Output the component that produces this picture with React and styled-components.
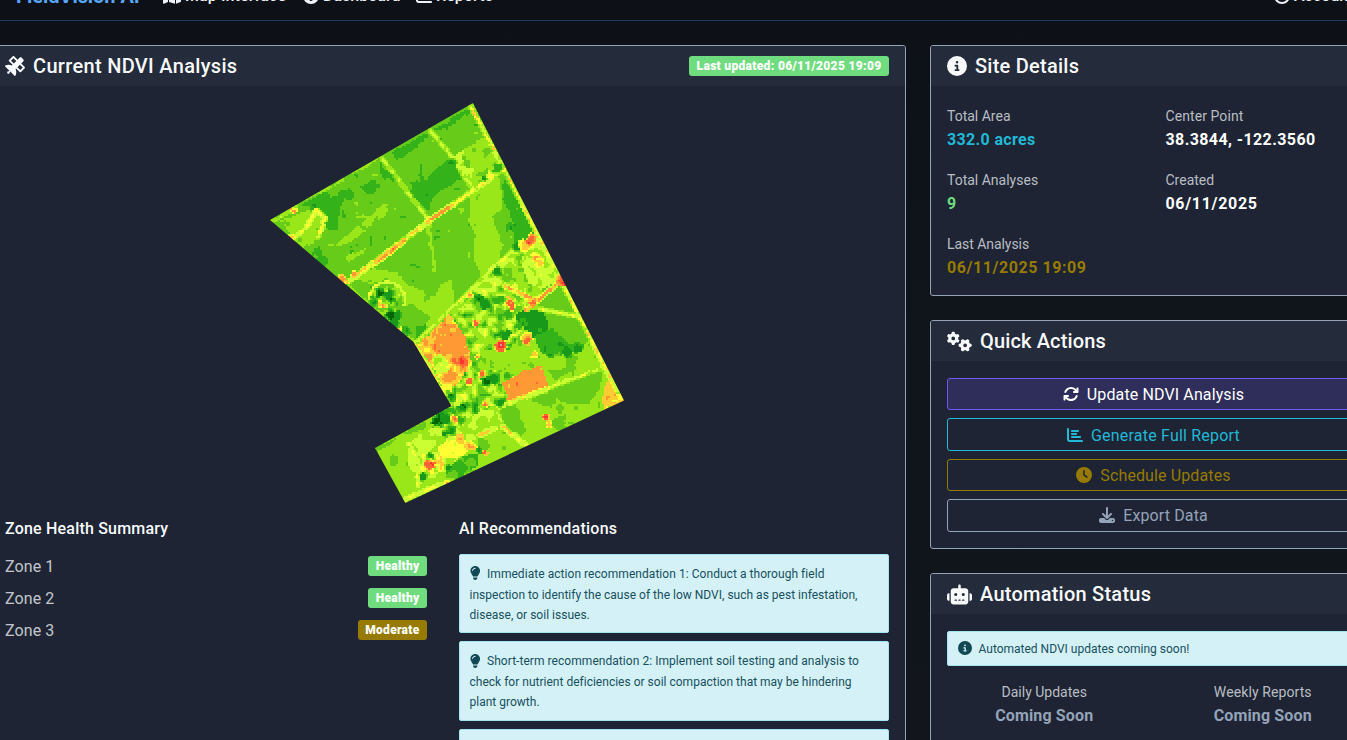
import React from "react";
import styled, { createGlobalStyle } from "styled-components";
import {
  FaSatellite, FaCircleInfo, FaGears, FaArrowsRotate, FaChartBar, FaClock,
  FaDownload, FaRobot, FaLightbulb, FaMapLocationDot, FaGauge, FaChartLine, FaCircleUser,
} from "react-icons/fa6";

const GlobalStyle = createGlobalStyle`
  * { box-sizing: border-box; }
  html, body { margin: 0; height: 740px; overflow: hidden; }
  body {
    background: linear-gradient(180deg, #0d1117 0%, #10141b 50%, #12151c 100%);
    color: #f8fafc;
    font: 400 16px/24px Roboto, "Liberation Sans", sans-serif;
  }
  svg { display: block; flex: none; }
`;

const Page = styled.div`
  width: 1347px;
  height: 740px;
  overflow: hidden;
`;
const Nav = styled.nav`
  display: flex;
  align-items: center;
  height: 49px;
  margin-top: -28px;
  padding-left: 16px;
  border-bottom: 1px solid #1f3a5f;
  font-weight: 500;
  white-space: nowrap;
`;
const Brand = styled.span`
  width: 147px;
  color: #58a6ff;
  font-size: 20px;
  font-weight: 700;
  letter-spacing: -0.05px;
  margin-top: -1px;
`;
const NavLink = styled.span`
  display: flex;
  align-items: center;
  gap: 4px;
  width: ${(p) => p.$w}px;
  letter-spacing: ${(p) => p.$ls || 0}px;
  color: #eef1f6;
`;
const Spacer = styled.div`
  flex: 1;
`;
const Main = styled.main`
  display: grid;
  grid-template-columns: 918px 447px;
  gap: 24px;
  align-items: start;
  width: 1389px;
  margin: 24px 0 0 -12px;
`;
const Side = styled.div`
  display: flex;
  flex-direction: column;
  gap: 24px;
`;
const Card = styled.section`
  height: ${(p) => p.$h}px;
  border: 1px solid #94a3b8;
  border-radius: 3px;
  background: #1e2433;
  overflow: hidden;
`;
const CardHeader = styled.header`
  display: flex;
  align-items: center;
  justify-content: space-between;
  height: 40px;
  padding: 0 16px;
  background: #242b3a;
`;
const Title = styled.h5`
  display: flex;
  align-items: center;
  gap: 8px;
  margin: 0;
  font-size: 20px;
  line-height: 24px;
  font-weight: 500;
  letter-spacing: ${(p) => p.$ls || 0}px;
  white-space: nowrap;
`;
const Badge = styled.span`
  height: 20px;
  padding: 0 7.5px;
  border-radius: 3px;
  background: ${(p) => (p.$warn ? "#967b00" : "#6fdc7f")};
  color: #fff;
  font-size: 12px;
  line-height: 20px;
  font-weight: 900;
  letter-spacing: ${(p) => p.$ls || 0}px;
  white-space: nowrap;
`;
const CardBody = styled.div`
  padding: 17px 16px 16px;
`;
const MapFrame = styled.div`
  display: flex;
  justify-content: center;
  height: 416px;
`;
const Columns = styled.div`
  display: grid;
  grid-template-columns: 430px 430px;
  gap: 24px;
`;
const SubTitle = styled.h6`
  margin: 0 0 16px;
  font-size: 16px;
  line-height: 19px;
  font-weight: 500;
  letter-spacing: ${(p) => p.$ls || 0}px;
`;
const Zone = styled.div`
  display: flex;
  align-items: center;
  justify-content: space-between;
  height: 24px;
  margin-bottom: 8px;
  padding-right: 8px;
  color: #c3c6cc;
  letter-spacing: 0.1px;
`;
const ZoneName = styled.span`
  padding-top: 2px;
`;
const Alert = styled.div`
  margin-bottom: ${(p) => p.$mb || 8}px;
  padding: ${(p) => p.$pad || "9px 9.5px 8px"};
  height: ${(p) => p.$h}px;
  border: 1px solid #a4e4f0;
  border-radius: 2px;
  background: #d3f1f7;
  color: #17505e;
  font-size: 12px;
  line-height: 20.5px;
  white-space: nowrap;
`;
const AlertLine = styled.div`
  display: flex;
  align-items: center;
  gap: 7px;
  letter-spacing: ${(p) => p.$ls || 0}px;
  & svg { color: #114854; margin-top: -2px; }
`;
const Bulb = styled(FaLightbulb)`
  width: 10.5px;
  height: 14px;
`;
const Facts = styled.div`
  display: grid;
  grid-template-columns: 218.5px 218.5px;
  row-gap: 16px;
  margin: 0 ${(p) => (p.$center ? "-12px" : "0")};
  text-align: ${(p) => (p.$center ? "center" : "left")};
  white-space: nowrap;
`;
const FactLabel = styled.div`
  padding-top: 1px;
  height: 24px;
  font-size: 14px;
  color: #b9bdc4;
  letter-spacing: ${(p) => p.$ls || 0}px;
`;
const FactValue = styled.div`
  padding-top: 1px;
  height: 24px;
  font-weight: 700;
  color: ${(p) => p.$color || "#fff"};
  letter-spacing: ${(p) => p.$ls || 0}px;
`;
const Actions = styled.div`
  display: grid;
  gap: 8px;
`;
const ActionButton = styled.button`
  display: flex;
  align-items: center;
  justify-content: center;
  gap: 8px;
  height: 32.4px;
  padding: 0;
  border: 1px solid ${(p) => p.$border};
  border-radius: 3px;
  background: ${(p) => p.$bg || "transparent"};
  color: ${(p) => p.$color};
  font: 400 16px/24px Roboto, sans-serif;
  letter-spacing: ${(p) => p.$ls || 0}px;
`;
const ActionText = styled.span`
  padding-top: ${(p) => p.$drop || 1.2}px;
`;

/* ---- NDVI raster: classes run from bare soil (0) to dense canopy (11) ---- */
const PALETTE = [
  "#cc9999", "#ff3333", "#ff6633", "#ff9933", "#ffcc33", "#ffff33",
  "#ccff33", "#99e619", "#66cc19", "#33b319", "#199919", "#006600",
];
const OUTLINE = [[473, 103], [624, 400.5], [405.3, 503], [375, 448], [451.5, 406], [413.5, 342], [270, 220]];

const hash = (x, y, s) => {
  let n = Math.imul(x, 374761393) + Math.imul(y, 668265263) + Math.imul(s, 1442695041);
  n = Math.imul(n ^ (n >>> 13), 1274126177);
  return ((n ^ (n >>> 16)) >>> 0) / 4294967295;
};
const noise = (x, y, scale, seed) => {
  const fx = x / scale, fy = y / scale;
  const ix = Math.floor(fx), iy = Math.floor(fy);
  const u = fx - ix, v = fy - iy;
  const a = hash(ix, iy, seed), b = hash(ix + 1, iy, seed);
  const c = hash(ix, iy + 1, seed), d = hash(ix + 1, iy + 1, seed);
  return (a + (b - a) * u + (c - a + (a - b - c + d) * u) * v) * 2 - 1;
};
const inside = (x, y, poly) => {
  let hit = false;
  for (let i = 0, j = poly.length - 1; i < poly.length; j = i++) {
    const [xi, yi] = poly[i], [xj, yj] = poly[j];
    if (yi > y !== yj > y && x < ((xj - xi) * (y - yi)) / (yj - yi) + xi) hit = !hit;
  }
  return hit;
};
const segDist = (x, y, [x1, y1, x2, y2]) => {
  const dx = x2 - x1, dy = y2 - y1;
  const t = Math.max(0, Math.min(1, ((x - x1) * dx + (y - y1) * dy) / (dx * dx + dy * dy)));
  return Math.hypot(x - x1 - t * dx, y - y1 - t * dy);
};

// [base class, noise amplitude, noise scale, polygon]
const FIELDS = [
  [7.1, 0.8, 6, [[280, 221], [314, 207], [325, 213], [325, 228], [315, 242], [303, 247]]],
  [7.4, 0.5, 8, [[333, 247], [385, 203], [402, 196], [403, 204], [375, 222], [350, 243]]],
  [7.3, 0.5, 5, [[345, 257], [368, 247], [364, 253], [348, 262]]],
  [8.7, 0.7, 7, [[296, 205], [325, 192], [350, 190], [375, 180], [382, 189], [340, 207], [337, 230], [324, 218], [315, 206]]],
  [9, 0.5, 6, [[321, 204], [345, 190], [340, 212], [334, 232], [325, 226]]],
  [9, 0.4, 5, [[380, 158], [384, 168], [392, 175], [385, 180], [380, 174]]],
  [9.1, 0.5, 6, [[392, 152], [425, 134], [430, 135], [408, 154], [396, 160]]],
  [9, 0.6, 6, [[420, 161], [425, 180], [443, 162], [454, 160], [461, 178], [432, 198], [428, 212], [411, 194], [411, 182], [420, 181]]],
  [8.9, 0.6, 6, [[433, 130], [470, 107], [470, 113], [447, 127], [436, 132]]],
  [7.3, 0.6, 6, [[455, 155], [484, 137], [501, 166], [484, 174], [472, 188]]],
  [6.3, 0.7, 4, [[453, 156], [463, 150], [464, 166], [474, 169], [470, 184]]],
  [7, 0.5, 7, [[471, 192], [500, 176], [503, 205], [492, 218], [503, 245], [500, 258], [482, 278], [475, 260], [475, 235], [469, 220]]],
  [8.9, 0.5, 6, [[504, 177], [510, 188], [537, 235], [520, 245], [513, 245], [514, 224], [508, 208], [503, 200]]],
  [7.2, 0.5, 7, [[351, 277], [375, 268], [397, 272], [405, 282], [425, 292], [451, 280], [455, 300], [425, 330], [413, 330], [406, 305], [391, 282], [370, 284]]],
  [8.1, 0.4, 6, [[407, 303], [418, 308], [430, 318], [419, 337], [408, 325]]],
  [9, 0.4, 5, [[414, 326], [426, 325], [426, 336], [417, 340]]],
  [6.9, 1.3, 5, [[486, 272], [512, 249], [538, 232], [573, 302], [560, 285], [520, 318], [482, 303], [440, 320], [456, 304]]],
  [6.2, 0.9, 5, [[530, 238], [543, 244], [562, 280], [540, 290], [525, 280], [523, 258]]],
  [7.3, 2.2, 5, [[456, 312], [476, 287], [504, 286], [523, 308], [523, 330], [502, 363], [500, 380], [508, 405], [450, 406], [433, 374], [418, 345]]],
  [7.2, 0.8, 6, [[480, 350], [512, 349], [520, 356], [504, 372], [490, 370]]],
  [8, 0.5, 8, [[536, 302], [561, 284], [570, 301], [583, 318], [593, 338], [578, 350], [550, 342], [540, 315]]],
  [9.8, 0.6, 6, [[514, 315], [528, 308], [542, 312], [549, 323], [547, 339], [537, 342], [522, 326]]],
  [9.1, 0.8, 5, [[533, 336], [552, 327], [570, 345], [580, 350], [552, 359], [541, 352]]],
  [7.2, 0.5, 7, [[505, 369], [521, 356], [552, 358], [590, 345], [604, 362], [602, 368], [550, 386], [544, 367], [528, 367]]],
  [7.9, 0.4, 7, [[549, 370], [574, 368], [556, 381]]],
  [8, 0.4, 8, [[548, 390], [603, 369], [599, 390], [588, 404], [562, 402]]],
  [8, 0.4, 8, [[532, 399], [552, 391], [557, 398], [552, 409], [535, 402]]],
  [8, 0.4, 6, [[498, 410], [516, 405], [526, 430], [522, 436], [505, 429]]],
  [8, 0.6, 5, [[551, 420], [565, 415], [566, 429], [555, 429]]],
  [3.9, 1.5, 5, [[417, 345], [430, 333], [449, 315], [457, 322], [466, 340], [473, 365], [464, 374], [451, 391], [444, 390], [433, 367]]],
  [3.2, 0.7, 5, [[438, 328], [455, 323], [466, 337], [464, 356], [448, 356], [438, 345]]],
  [6, 1.4, 5, [[431, 358], [444, 354], [450, 370], [437, 374]]],
  [2.95, 0.6, 4, [[503, 383], [523, 371], [541, 366], [544, 374], [549, 388], [527, 397], [509, 404]]],
  [4, 0.8, 4, [[602, 390], [611, 377], [624, 401], [604, 410]]],
  [8, 2.4, 5, [[432, 417], [450, 407], [477, 402], [480, 415], [468, 432], [447, 436]]],
  [6.4, 0.9, 6, [[409, 440], [432, 427], [455, 429], [480, 410], [495, 410], [486, 430], [468, 448], [448, 468], [435, 478], [408, 478]]],
  [5.8, 2, 4, [[417, 455], [438, 454], [450, 470], [430, 475], [415, 490]]],
  [5, 0.8, 5, [[437, 447], [448, 440], [466, 440], [478, 447], [463, 455], [440, 460]]],
  [8.5, 0.8, 5, [[446, 470], [458, 458], [478, 454], [477, 467], [458, 479], [446, 480]]],
  [8, 0.4, 5, [[375, 448], [397, 437], [390, 444], [378, 451]]],
  [8, 0.5, 5, [[402, 433], [425, 421], [427, 427], [410, 434]]],
];
// [class, half width, jitter, x1, y1, x2, y2]
const ROADS = [
  [6.6, 1.2, 0.6, 381, 157, 428, 219], [7.1, 1.3, 0.3, 428, 220, 435, 270],
  [6.4, 1.2, 0.6, 430, 130, 453, 158], [6.4, 1.5, 0.8, 453, 158, 472, 188],
  [5, 1.7, 1.2, 345, 284, 428, 222], [3.4, 1.5, 1, 376, 263, 404, 241],
  [3.4, 1.6, 0.8, 428, 221, 454, 204], [5.6, 1.6, 1.3, 454, 204, 502, 170],
  [5.4, 1.4, 1.6, 471, 107, 501, 162], [5.3, 1.3, 1.4, 501, 162, 538, 236],
  [5.4, 1.4, 1.6, 538, 236, 621, 398], [6, 1.3, 0.9, 418, 340, 516, 247],
  [3.6, 1.6, 1, 526, 310, 562, 280], [4, 1.6, 1.2, 505, 286, 530, 298],
  [5.7, 1.4, 0.8, 540, 309, 580, 317], [6.1, 1.3, 0.9, 498, 407, 604, 367],
  [6.2, 1.2, 0.9, 496, 409, 503, 427], [5.3, 1.4, 1.4, 503, 427, 528, 447],
  [5.5, 1.5, 1, 316, 209, 325, 218], [5.8, 1.4, 0.9, 325, 218, 318, 238],
  [5.2, 1.4, 1, 316, 211, 306, 228], [6, 1.1, 0.9, 304, 229, 292, 242],
  [6.1, 1.4, 0.7, 273, 220, 294, 208], [5, 1.4, 1, 411, 340, 450, 404],
  [5.6, 1.3, 1.2, 409, 444, 418, 462], [5, 1.6, 1.4, 480, 435, 496, 428],
  [5.8, 1.2, 1, 405, 499, 450, 480], [7.2, 1.2, 0.7, 340, 279, 412, 341],
  [7.1, 1, 0.8, 272, 219, 380, 157],
];
// [class, radius, x, y]
const SPOTS = [
  [2.6, 2.3, 294, 211], [3, 3, 290, 238], [3, 4, 342, 279], [2.6, 3, 354, 274], [9.8, 4, 314, 204],
  [9.3, 4, 317, 252], [9.6, 4, 322, 261], [10.8, 4, 380, 293], [10, 4, 389, 294], [10.7, 3.2, 391, 299],
  [4, 2.7, 378, 303], [3, 2.5, 383, 306], [9.2, 3, 373, 303], [10.9, 4.5, 391, 315], [10.4, 4, 398, 316],
  [10.4, 4, 395, 323], [9.8, 4, 406, 330], [4, 2, 400, 329], [9.7, 4, 451, 163], [9.5, 4, 498, 168],
  [10, 2.2, 484, 179], [4.5, 3, 490, 176], [9.9, 3, 511, 228], [10, 2.5, 516, 247],
  [3.8, 6, 526, 245], [2, 4, 532, 239], [1.2, 2.5, 529, 243], [3, 4, 536, 258], [4, 4, 540, 263],
  [3.3, 2.3, 470, 296], [10.5, 4.2, 479, 299], [10, 4, 485, 304], [10.2, 4, 498, 271], [9.5, 4, 500, 300],
  [9.4, 4, 508, 314], [1.6, 3, 509, 302], [1.7, 3, 512, 306], [2, 3, 533, 303], [1.3, 2.7, 475, 324],
  [3, 5, 502, 346], [1, 4.4, 501, 346], [0, 1.7, 501, 345], [3, 4.5, 527, 339], [1.3, 3.2, 527, 341],
  [3.5, 3, 535, 354], [10, 4, 506, 335], [9.6, 3, 519, 325], [1, 5.2, 462, 362], [2, 3, 455, 360],
  [1.5, 3, 469, 382], [2, 2.6, 482, 374], [10.9, 4, 486, 381], [10.2, 4, 493, 379], [9, 3.5, 508, 376],
  [10.7, 3, 451, 396], [9.7, 3, 453, 400], [10.8, 4.5, 440, 415], [10.9, 4, 437, 421], [10.2, 4, 445, 419],
  [2, 2.6, 455, 419], [9.8, 3.8, 452, 430], [10.2, 2.6, 446, 434], [10.5, 3.3, 500, 402], [2, 2, 486, 404],
  [3, 4, 470, 446], [3.2, 4, 460, 438], [1.4, 2.5, 484, 452], [9.9, 2.6, 478, 451], [1.2, 3.3, 546, 417],
  [3.8, 3, 549, 425], [1.7, 4, 429, 465], [0, 1.7, 433, 465], [10, 3, 423, 477], [9.8, 3, 431, 456],
  [9.3, 5, 461, 467], [10, 2.5, 448, 468], [10.6, 3.5, 567, 352], [10, 4, 578, 348], [2, 4, 561, 280],
  [0, 1.3, 564, 283], [9.8, 3, 374, 303], [3, 2, 478, 357], [3.5, 2.4, 447, 483],
];

const classify = (x, y) => {
  let v = 8 + noise(x, y, 7, 3) * 0.58 + noise(x, y, 3, 5) * 0.1;
  if (y > 340 || x > 520) v = 7.15 + noise(x, y, 8, 8) * 0.6;
  FIELDS.forEach(([base, amp, scale, poly], i) => {
    if (inside(x + noise(x, y, 4, 71) * 1.5, y + noise(x, y, 4, 72) * 1.5, poly)) {
      v = base + noise(x, y, scale, 20 + i) * amp + noise(x, y, 2.5, 60) * amp * 0.3;
    }
  });
  const ring = Math.abs(Math.hypot(x - 387, (y - 300) * 1.02) - 18);
  if (ring < 1.5 && y < 306) v = 5.7 + noise(x, y, 3, 90) * 0.8;
  else if (Math.hypot(x - 385, y - 300) < 15 && y < 320) v = 7.6 + noise(x, y, 3, 91) * 1.5;
  ROADS.forEach(([cls, half, jitter, ...seg], i) => {
    const d = segDist(x, y, seg);
    if (d < half) v = cls + noise(x, y, 4, 100 + i) * jitter * 1.3;
    else if (d < half + 1.5) v = (v + cls) / 2;
  });
  SPOTS.forEach(([cls, r, sx, sy], i) => {
    const d = Math.hypot(x - sx, y - sy) + noise(x, y, 3, 200 + i) * 1.9;
    if (d < r) v = cls + (d / r) * (cls < 5 ? 0.9 : -0.5);
    else if (d < r + 1.2) v = (v + cls) / 2;
  });
  return Math.max(0, Math.min(11, Math.round(v)));
};

const buildRaster = () => {
  const paths = PALETTE.map(() => "");
  for (let y = 102; y < 504; y += 2) {
    let start = 268, current = -1;
    for (let x = 268; x <= 628; x += 2) {
      const cls = x < 628 ? classify(x + 1, y + 1) : -1;
      if (cls !== current) {
        if (current >= 0) paths[current] += `M${start} ${y}h${x - start}v2H${start}z`;
        start = x;
        current = cls;
      }
    }
  }
  return paths;
};
const RASTER = buildRaster();

const NdviMap = () => (
  <svg width="356" height="401" viewBox="269 103 356 401" aria-label="NDVI map">
    <defs>
      <clipPath id="site"><polygon points={OUTLINE.map((p) => p.join(",")).join(" ")} /></clipPath>
    </defs>
    <g clipPath="url(#site)">
      {RASTER.map((d, i) => <path key={i} d={d} fill={PALETTE[i]} shapeRendering="crispEdges" />)}
    </g>
  </svg>
);

const Fact = ({ label, value, color, ls, vls }) => (
  <div>
    <FactLabel $ls={ls}>{label}</FactLabel>
    <FactValue $color={color} $ls={vls}>{value}</FactValue>
  </div>
);

const ZONES = [
  { name: "Zone 1", status: "Healthy" },
  { name: "Zone 2", status: "Healthy" },
  { name: "Zone 3", status: "Moderate", warn: true },
];
const RECOMMENDATIONS = [
  ["Immediate action recommendation 1: Conduct a thorough field", "inspection to identify the cause of the low NDVI, such as pest infestation,", "disease, or soil issues."],
  ["Short-term recommendation 2: Implement soil testing and analysis to", "check for nutrient deficiencies or soil compaction that may be hindering", "plant growth."],
  [],
];

export default function App() {
  return (
    <Page>
      <GlobalStyle />
      <Nav>
        <Brand>FieldVision AI</Brand>
        <NavLink $w={140} $ls={0.1}><FaMapLocationDot size={18} />Map Interface</NavLink>
        <NavLink $w={113}><FaGauge size={16} />Dashboard</NavLink>
        <NavLink $w={90} $ls={0.1}><FaChartLine size={16} />Reports</NavLink>
        <Spacer />
        <NavLink $w={73}><FaCircleUser size={16} />Account</NavLink>
      </Nav>
      <Main>
        <Card $h={760}>
          <CardHeader>
            <Title $ls={0.32}><FaSatellite size={20} />Current NDVI Analysis</Title>
            <Badge $ls={0.32}>Last updated: 06/11/2025 19:09</Badge>
          </CardHeader>
          <CardBody>
            <MapFrame><NdviMap /></MapFrame>
            <Columns>
              <div>
                <SubTitle $ls={0.2}>Zone Health Summary</SubTitle>
                {ZONES.map((zone) => (
                  <Zone key={zone.name}>
                    <ZoneName>{zone.name}</ZoneName>
                    <Badge $warn={zone.warn} $ls={0.28}>{zone.status}</Badge>
                  </Zone>
                ))}
              </div>
              <div>
                <SubTitle $ls={0.25}>AI Recommendations</SubTitle>
                {RECOMMENDATIONS.map((lines, i) => (
                  <Alert key={i} $h={79.25}>
                    {lines.map((line, n) => (
                      <AlertLine key={n} $ls={n === 0 ? 0.05 : 0.01}>{n === 0 && <Bulb />}{line}</AlertLine>
                    ))}
                  </Alert>
                ))}
              </div>
            </Columns>
          </CardBody>
        </Card>
        <Side>
          <Card $h={251}>
            <CardHeader><Title $ls={0.25}><FaCircleInfo size={20} />Site Details</Title></CardHeader>
            <CardBody>
              <Facts>
                <Fact label="Total Area" value="332.0 acres" color="#22b8d6" vls={0.35} />
                <Fact label="Center Point" value="38.3844, -122.3560" vls={0.4} ls={0.08} />
                <Fact label="Total Analyses" value="9" color="#6fdc7f" />
                <Fact label="Created" value="06/11/2025" vls={0.68} />
                <Fact label="Last Analysis" value="06/11/2025 19:09" color="#967b00" vls={0.56} ls={-0.05} />
              </Facts>
            </CardBody>
          </Card>
          <Card $h={229}>
            <CardHeader><Title $ls={0.14}><FaGears size={25} />Quick Actions</Title></CardHeader>
            <CardBody>
              <Actions>
                <ActionButton $ls={0.12} $border="#7357f2" $bg="#2f2e5a" $color="#fff"><FaArrowsRotate size={16} /><ActionText>Update NDVI Analysis</ActionText></ActionButton>
                <ActionButton $ls={0.2} $border="#22b8d6" $color="#22b8d6"><FaChartBar size={16} /><ActionText $drop={2.4}>Generate Full Report</ActionText></ActionButton>
                <ActionButton $ls={0.12} $border="#967b00" $color="#967b00"><FaClock size={16} /><ActionText>Schedule Updates</ActionText></ActionButton>
                <ActionButton $ls={0.12} $border="#94a3b8" $color="#94a3b8"><FaDownload size={16} /><ActionText>Export Data</ActionText></ActionButton>
              </Actions>
            </CardBody>
          </Card>
          <Card $h={200}>
            <CardHeader><Title $ls={0.24}><FaRobot size={25} />Automation Status</Title></CardHeader>
            <CardBody>
              <Alert $h={35} $mb={13} $pad="6.5px 9.5px">
                <AlertLine><FaCircleInfo size={14} />Automated NDVI updates coming soon!</AlertLine>
              </Alert>
              <Facts $center>
                <Fact label="Daily Updates" value="Coming Soon" color="#94a3b8" vls={0.15} />
                <Fact label="Weekly Reports" value="Coming Soon" color="#94a3b8" vls={0.15} ls={0.1} />
              </Facts>
            </CardBody>
          </Card>
        </Side>
      </Main>
    </Page>
  );
}
